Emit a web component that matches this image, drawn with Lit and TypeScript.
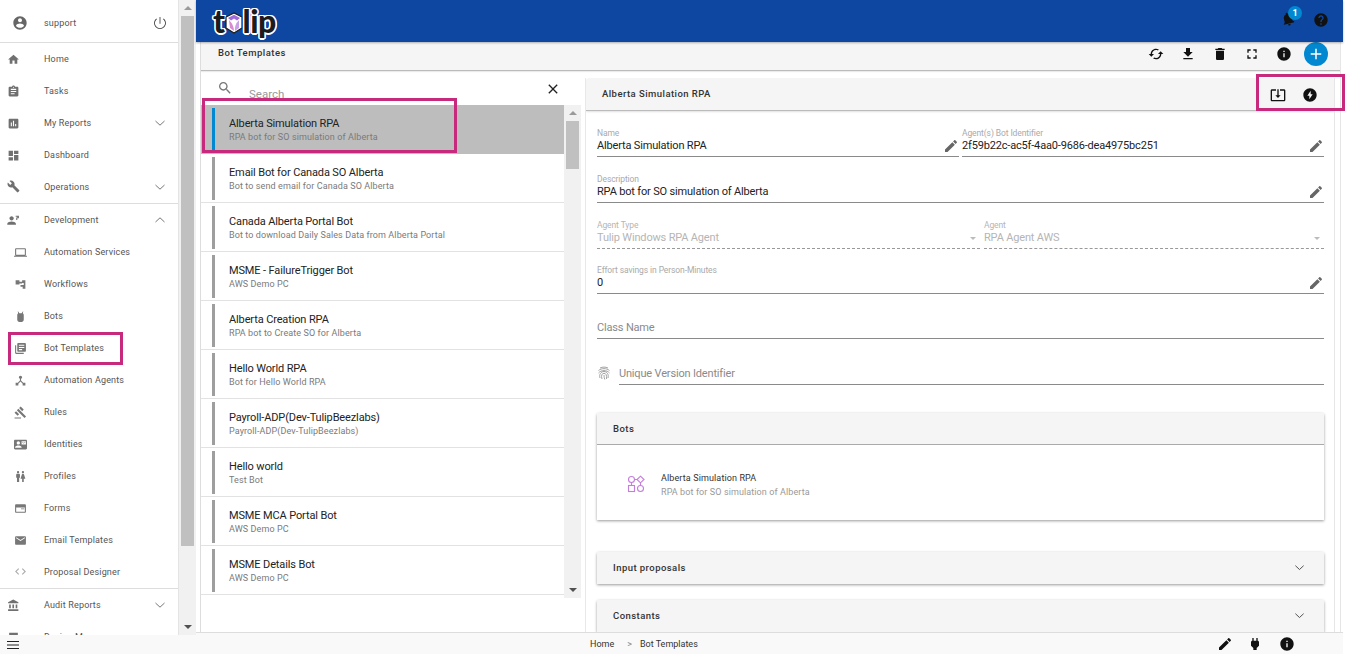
import { LitElement, html, css } from "lit";
import { customElement } from "lit/decorators.js";

const P: Record<string, string> = {
  account: "M12 2C6.48 2 2 6.48 2 12s4.48 10 10 10 10-4.48 10-10S17.52 2 12 2zm0 3c1.66 0 3 1.34 3 3s-1.34 3-3 3-3-1.34-3-3 1.34-3 3-3zm0 14.2c-2.5 0-4.71-1.28-6-3.22.03-1.99 4-3.08 6-3.08 1.99 0 5.97 1.09 6 3.08-1.29 1.94-3.5 3.22-6 3.22z",
  power: "M12.6 3h-1.2v10h1.2V3zm4.9 2.4l-.85.85C18.4 7.6 19.6 9.7 19.6 12c0 4.2-3.4 7.6-7.6 7.6S4.4 16.2 4.4 12c0-2.3 1.2-4.4 2.95-5.75L6.5 5.4C4.4 7 3.2 9.4 3.2 12c0 4.9 3.9 8.8 8.8 8.8s8.8-3.9 8.8-8.8c0-2.6-1.2-5-3.3-6.6z",
  home: "M10 20v-6h4v6h5v-8h3L12 3 2 12h3v8z",
  tasks: "M19 3h-4.18C14.4 1.84 13.3 1 12 1c-1.3 0-2.4.84-2.82 2H5c-1.1 0-2 .9-2 2v14c0 1.1.9 2 2 2h14c1.1 0 2-.9 2-2V5c0-1.1-.9-2-2-2zm-7 0c.55 0 1 .45 1 1s-.45 1-1 1-1-.45-1-1 .45-1 1-1zm2 14H7v-2h7v2zm3-4H7v-2h10v2zm0-4H7V7h10v2z",
  reports: "M19 3H5c-1.1 0-2 .9-2 2v14c0 1.1.9 2 2 2h14c1.1 0 2-.9 2-2V5c0-1.1-.9-2-2-2zM9 17H7v-7h2v7zm4 0h-2V7h2v10zm4 0h-2v-4h2v4z",
  dashboard: "M3 13h8V3H3v10zm0 8h8v-6H3v6zm10 0h8V11h-8v10zm0-18v6h8V3h-8z",
  build: "M22.7 19l-9.1-9.1c.9-2.3.4-5-1.5-6.9-2-2-5-2.4-7.4-1.3L9 6 6 9 1.6 4.7C.4 7.1.9 10.1 2.9 12.1c1.9 1.9 4.6 2.4 6.9 1.5l9.1 9.1c.4.4 1 .4 1.4 0l2.3-2.3c.5-.4.5-1.1.1-1.4z",
  dev: "M8.5 12c2.2 0 4-1.8 4-4s-1.8-4-4-4-4 1.8-4 4 1.8 4 4 4zm0 2c-2.7 0-8 1.3-8 4v2h16v-2c0-2.7-5.3-4-8-4zM16 3h6v5h-3v3h-2V6.5h2V5h-3z",
  laptop: "M20 18c1.1 0 1.99-.9 1.99-2L22 6c0-1.1-.9-2-2-2H4c-1.1 0-2 .9-2 2v10c0 1.1.9 2 2 2H0v2h24v-2h-4zM4 6h16v10H4V6z",
  flows: "M3 4h7v8H3zM10 7h5v3h-5zM15 4h6v16h-5v-4h-4v-3h6V9h-3z",
  bot: "M9 6h6c1.7 0 3 1.3 3 3v9c0 2.2-1.8 4-4 4h-4c-2.2 0-4-1.8-4-4V9c0-1.7 1.3-3 3-3zM7 2l3 4H7.5zM17 2l-3 4h2.5z",
  library: "M4 6H2v14c0 1.1.9 2 2 2h14v-2H4V6zm16-4H8c-1.1 0-2 .9-2 2v12c0 1.1.9 2 2 2h12c1.1 0 2-.9 2-2V4c0-1.1-.9-2-2-2zm-1 9H9V9h10v2zm-4 4H9v-2h6v2zm4-8H9V5h10v2z",
  hub: "M17 16l-4-4V8.82C14.16 8.4 15 7.3 15 6c0-1.66-1.34-3-3-3S9 4.34 9 6c0 1.3.84 2.4 2 2.82V12l-4 4H3v5h5v-3.05l4-4.2 4 4.2V21h5v-5h-4z",
  gavel: "M1 21h12v2H1zM5.245 8.07l2.83-2.827 14.14 14.142-2.828 2.828zM12.317 1l5.657 5.656-2.83 2.83-5.654-5.66zM3.825 9.485l5.657 5.657-2.828 2.828-5.657-5.657z",
  identity: "M21 8V7l-3 2-3-2v1l3 2 3-2zm1-5H2C.9 3 0 3.9 0 5v14c0 1.1.9 2 2 2h20c1.1 0 1.99-.9 1.99-2L24 5c0-1.1-.9-2-2-2zM8 6c1.66 0 3 1.34 3 3s-1.34 3-3 3-3-1.34-3-3 1.34-3 3-3zm6 12H2v-1c0-2 4-3.1 6-3.1s6 1.1 6 3.1v1zm8-6h-8V6h8v6z",
  wc: "M5.5 22v-7.5H4V9c0-1.1.9-2 2-2h3c1.1 0 2 .9 2 2v5.5H9.5V22h-4zM18 22v-6h3l-2.54-7.63C18.18 7.55 17.42 7 16.56 7h-.12c-.86 0-1.63.55-1.9 1.37L12 16h3v6h3zM7.5 6c1.11 0 2-.89 2-2s-.89-2-2-2-2 .89-2 2 .89 2 2 2zm9 0c1.11 0 2-.89 2-2s-.89-2-2-2-2 .89-2 2 .89 2 2 2z",
  form: "M4 4h16c1.1 0 2 .9 2 2v12c0 1.1-.9 2-2 2H4c-1.1 0-2-.9-2-2V6c0-1.1.9-2 2-2zm0 6v8h16v-8zm9 2h6v1.5h-6z",
  mail: "M20 4H4c-1.1 0-1.99.9-1.99 2L2 18c0 1.1.9 2 2 2h16c1.1 0 2-.9 2-2V6c0-1.1-.9-2-2-2zm0 4l-8 5-8-5V6l8 5 8-5v2z",
  code: "M9.4 16.6L4.8 12l4.6-4.6L8 6l-6 6 6 6 1.4-1.4zm5.2 0l4.6-4.6-4.6-4.6L16 6l6 6-6 6-1.4-1.4z",
  bank: "M4 10v7h3v-7H4zm6 0v7h3v-7h-3zM2 22h19v-3H2v3zm14-12v7h3v-7h-3zm-4.5-9L2 6v2h19V6l-9.5-5z",
  design: "M4 3h16v7H4zM2 12h20v9H2z",
  search: "M15.5 14h-.79l-.28-.27C15.41 12.59 16 11.11 16 9.5 16 5.91 13.09 3 9.5 3S3 5.91 3 9.5 5.91 16 9.5 16c1.61 0 3.09-.59 4.23-1.57l.27.28v.79l5 4.99L20.49 19l-4.99-5zm-6 0C7.01 14 5 11.99 5 9.5S7.01 5 9.5 5 14 7.01 14 9.5 11.99 14 9.5 14z",
  close: "M19 6.41L17.59 5 12 10.59 6.41 5 5 6.41 10.59 12 5 17.59 6.41 19 12 13.41 17.59 19 19 17.59 13.41 12z",
  edit: "M3 17.25V21h3.75L17.81 9.94l-3.75-3.75L3 17.25zM20.71 7.04c.39-.39.39-1.02 0-1.41l-2.34-2.34c-.39-.39-1.02-.39-1.41 0l-1.83 1.83 3.75 3.75 1.83-1.83z",
  bell: "M12 22c1.1 0 2-.9 2-2h-4c0 1.1.9 2 2 2zm6-6v-5c0-3.07-1.63-5.64-4.5-6.32V4c0-.83-.67-1.5-1.5-1.5s-1.5.67-1.5 1.5v.68C7.64 5.36 6 7.92 6 11v5l-2 2v1h16v-1l-2-2z",
  help: "M12 2C6.48 2 2 6.48 2 12s4.48 10 10 10 10-4.48 10-10S17.52 2 12 2zm1 17h-2v-2h2v2zm2.07-7.75l-.9.92C13.45 12.9 13 13.5 13 15h-2v-.5c0-1.1.45-2.1 1.17-2.83l1.24-1.26c.37-.36.59-.86.59-1.41 0-1.1-.9-2-2-2s-2 .9-2 2H8c0-2.21 1.79-4 4-4s4 1.79 4 4c0 .88-.36 1.68-.93 2.25z",
  sync: "M12 4V1L8 5l4 4V6c3.31 0 6 2.69 6 6 0 1.01-.25 1.97-.7 2.8l1.46 1.46C19.54 15.03 20 13.57 20 12c0-4.42-3.58-8-8-8zm0 14c-3.31 0-6-2.69-6-6 0-1.01.25-1.97.7-2.8L5.24 7.74C4.46 8.97 4 10.43 4 12c0 4.42 3.58 8 8 8v3l4-4-4-4v3z",
  download: "M19 9h-4V3H9v6H5l7 7 7-7zM5 18v2h14v-2H5z",
  trash: "M6 19c0 1.1.9 2 2 2h8c1.1 0 2-.9 2-2V7H6v12zM19 4h-3.5l-1-1h-5l-1 1H5v2h14V4z",
  full: "M7 14H5v5h5v-2H7v-3zm-2-4h2V7h3V5H5v5zm12 7h-3v2h5v-5h-2v3zM14 5v2h3v3h2V5h-5z",
  info: "M12 2C6.48 2 2 6.48 2 12s4.48 10 10 10 10-4.48 10-10S17.52 2 12 2zm1 15h-2v-6h2v6zm0-8h-2V7h2v2z",
  add: "M19 13h-6v6h-2v-6H5v-2h6V5h2v6h6v2z",
  update: "M12 16.5l4-4h-3v-9h-2v9H8l4 4zm9-13h-6v1.99h6v14.03H3V5.49h6V3.5H3c-1.1 0-2 .9-2 2v14c0 1.1.9 2 2 2h18c1.1 0 2-.9 2-2v-14c0-1.1-.9-2-2-2z",
  flash: "M12 2C6.48 2 2 6.48 2 12s4.48 10 10 10 10-4.48 10-10S17.52 2 12 2zm-1 16.5V13H8l5-7.5V11h3l-5 7.5z",
  plug: "M16.01 7L16 3h-2v4h-4V3H8v4h-.01C7 6.99 6 7.99 6 8.99v5.49L9.5 18v3h5v-3l3.5-3.51v-5.5c0-1-1-2-1.99-1.99z",
  menu: "M3 18h18v-1.5H3V18zm0-5.25h18v-1.5H3v1.5zM3 6v1.5h18V6H3z",
};

const icon = (name: string, cls = "") =>
  html`<svg class="ic ${cls}" viewBox="0 0 24 24" aria-hidden="true"><path d=${P[name]}></path></svg>`;

const chevron = (up = false) =>
  html`<svg class="chev" viewBox="0 0 12 12" aria-hidden="true"><polyline points=${up ? "1.5,8 6,3.8 10.5,8" : "1.5,4 6,8.2 10.5,4"}></polyline></svg>`;

interface Nav { label: string; icon: string; sub?: boolean; chev?: "up" | "down"; rule?: boolean; }

const NAV: Nav[] = [
  { label: "Home", icon: "home" },
  { label: "Tasks", icon: "tasks" },
  { label: "My Reports", icon: "reports", chev: "down" },
  { label: "Dashboard", icon: "dashboard" },
  { label: "Operations", icon: "build", chev: "down", rule: true },
  { label: "Development", icon: "dev", chev: "up" },
  { label: "Automation Services", icon: "laptop", sub: true },
  { label: "Workflows", icon: "flows", sub: true },
  { label: "Bots", icon: "bot", sub: true },
  { label: "Bot Templates", icon: "library", sub: true },
  { label: "Automation Agents", icon: "hub", sub: true },
  { label: "Rules", icon: "gavel", sub: true },
  { label: "Identities", icon: "identity", sub: true },
  { label: "Profiles", icon: "wc", sub: true },
  { label: "Forms", icon: "form", sub: true },
  { label: "Email Templates", icon: "mail", sub: true },
  { label: "Proposal Designer", icon: "code", sub: true, rule: true },
  { label: "Audit Reports", icon: "bank", chev: "down" },
  { label: "Design Manager", icon: "design" },
];

const ITEMS: [string, string][] = [
  ["Alberta Simulation RPA", "RPA bot for SO simulation of Alberta"],
  ["Email Bot for Canada SO Alberta", "Bot to send email for Canada SO Alberta"],
  ["Canada Alberta Portal Bot", "Bot to download Daily Sales Data from Alberta Portal"],
  ["MSME - FailureTrigger Bot", "AWS Demo PC"],
  ["Alberta Creation RPA", "RPA bot to Create SO for Alberta"],
  ["Hello World RPA", "Bot for Hello World RPA"],
  ["Payroll-ADP(Dev-TulipBeezlabs)", "Payroll-ADP(Dev-TulipBeezlabs)"],
  ["Hello world", "Test Bot"],
  ["MSME MCA Portal Bot", "AWS Demo PC"],
  ["MSME Details Bot", "AWS Demo PC"],
];

@customElement("app-root")
export class AppRoot extends LitElement {
  static styles = css`
    :host { display: block; position: relative; width: 1362px; height: 654px; overflow: hidden; background: #fff; font-family: Roboto, "Liberation Sans", sans-serif; color: #222; }
    * { box-sizing: border-box; }
    .ic { display: block; width: 16px; height: 16px; fill: currentColor; flex: none; }
    .chev { display: block; width: 12px; height: 12px; fill: none; stroke: #777; stroke-width: 1; flex: none; }
    .app { display: grid; grid-template-columns: 196px 1fr; width: 1343px; height: 654px; }

    .leftcol { display: flex; flex-direction: column; min-height: 0; height: 654px; }
    .side { flex: 1; display: flex; min-height: 0; }
    .menu { width: 179px; overflow: hidden; border-right: 1px solid #e4e4e4; }
    .profile { height: 43px; display: flex; align-items: center; border-bottom: 1px solid #ddd; color: #555; font-size: 9px; letter-spacing: .2px; padding-top: 4px; }
    .profile .who { width: 44px; display: flex; padding-left: 12px; color: #666; }
    .profile .grow { flex: 1; }
    .profile .pw { margin-right: 10px; color: #333; width: 16px; height: 16px; }
    .row { height: 32px; display: flex; align-items: center; color: #555; font-size: 9px; letter-spacing: .17px; }
    .row.rule { height: 33px; padding-bottom: 1px; border-bottom: 1px solid #ddd; }
    .row .slot { width: 44px; flex: none; display: flex; padding-left: 6.5px; color: #707070; }
    .row.sub .slot { padding-left: 13.5px; color: #777; }
    .row .slot .ic { width: 13px; height: 13px; }
    .row .slot .i-code { color: #aaa; }
    .row .lab { flex: 1; white-space: nowrap; }
    .row .chev { margin-right: 12px; }
    .sbar { width: 17px; background: #f1f1f1; display: flex; flex-direction: column; align-items: center; }
    .arr { width: 17px; height: 16px; display: flex; align-items: center; justify-content: center; flex: none; }
    .tri-up { width: 0; height: 0; border-left: 4px solid transparent; border-right: 4px solid transparent; border-bottom: 4px solid #9a9a9a; }
    .tri-dn { width: 0; height: 0; border-left: 4px solid transparent; border-right: 4px solid transparent; border-top: 4px solid #505050; }
    .side .thumb { width: 13px; height: 530px; background: #c0c0c0; flex: none; }
    .sp { flex: 1; }
    .leftfoot { height: 19px; flex: none; background: #f9f9f9; display: flex; align-items: center; padding-left: 5px; color: #222; }

    .maincol { display: flex; flex-direction: column; min-width: 0; height: 654px; }
    .top { height: 42px; flex: none; background: #0d47a1; display: flex; align-items: center; padding: 0 14px 0 17px; box-shadow: 0 1px 2px rgba(0,0,0,.3); position: relative; z-index: 2; }
    .logo { display: flex; align-items: center; font-family: Lato, "Open Sans", sans-serif; font-weight: 900; font-size: 32px; line-height: 36px; letter-spacing: -.5px; color: #1c1c1c; text-shadow: 1.5px 0 #fff, -1.5px 0 #fff, 0 1.5px #fff, 0 -1.5px #fff, 1.2px 1.2px #fff, -1.2px -1.2px #fff, 1.2px -1.2px #fff, -1.2px 1.2px #fff; margin-top: -1px; }
    .logo svg { width: 18px; height: 22px; margin-top: 5px; flex: none; }
    .grow { flex: 1; }
    .bellwrap { position: relative; width: 16px; height: 16px; margin: -4px 17px 0 0; color: #111; }
    .bellwrap .ic { transform: rotate(-14deg); }
    .badge { position: absolute; left: 8px; top: -5px; width: 14px; height: 14px; border-radius: 50%; background: #0288d1; color: #fff; font-size: 9px; font-weight: 700; display: flex; align-items: center; justify-content: center; }
    .help { color: #111; margin-top: -2px; }

    .body-wrap { flex: 1; min-height: 0; margin-left: 4px; margin-right: 2px; border-left: 1px solid #ddd; border-right: 1px solid #e6e6e6; display: flex; flex-direction: column; overflow: hidden; }
    .tools { height: 29px; flex: none; background: #f5f5f5; border-bottom: 1px solid #bbb; box-shadow: 0 1px 1px rgba(0,0,0,.08); display: flex; padding-right: 12px; }
    .tools .ttl { font-size: 9.5px; font-weight: 500; letter-spacing: .5px; padding: 5px 0 0 17px; color: #333; line-height: 12px; }
    .tools .acts { margin-left: auto; display: flex; align-items: center; gap: 16px; color: #111; height: 24px; }
    .tools .acts .i-sync { transform: rotate(90deg); }
    .fab { width: 24px; height: 24px; border-radius: 50%; background: #0288d1; color: #fff; display: flex; align-items: center; justify-content: center; margin-left: -4px; }
    .fab .ic { width: 18px; height: 18px; }

    .split { flex: 1; min-height: 0; display: flex; gap: 4px; }
    .listpane { width: 380px; flex: none; display: flex; flex-direction: column; }
    .searchrow { height: 34px; flex: none; display: flex; padding: 9px 20px 0 16px; color: #666; }
    .searchrow .mag { width: 16px; height: 16px; color: #777; }
    .searchrow .ph { font-size: 11.5px; color: #999; margin: 7px 0 0 16px; line-height: 14px; }
    .searchrow .x { margin-left: auto; color: #222; width: 16px; height: 16px; margin-top: 1px; }
    .listwrap { height: 493px; display: flex; flex: none; }
    .list { width: 363px; flex: none; overflow: hidden; }
    .item { height: 49px; display: flex; padding: 3px 0 2px 11px; border-bottom: 1px solid #e2e2e2; }
    .item:first-child { background: #bdbdbd; border-bottom-color: #bdbdbd; }
    .item .bar { width: 3px; background: #9e9e9e; flex: none; }
    .item:first-child .bar { background: #0288d1; }
    .item .txt { padding: 9px 0 0 14px; }
    .item .t { font-size: 11px; line-height: 14px; color: #222; white-space: nowrap; letter-spacing: -.13px; }
    .item .s { font-size: 9px; line-height: 12px; color: #7a7a7a; white-space: nowrap; letter-spacing: .1px; }
    .lbar { width: 17px; background: #f1f1f1; display: flex; flex-direction: column; align-items: center; }
    .lbar .thumb { width: 13px; height: 48px; background: #c0c0c0; flex: none; }

    .detail { flex: 1; min-width: 0; margin-top: 7px; margin-right: 5px; border-left: 1px solid #e8e8e8; border-right: 1px solid #e6e6e6; overflow: hidden; }
    .dhead { height: 33px; background: #f5f5f5; border-bottom: 1px solid #bbb; border-radius: 4px 4px 0 0; box-shadow: 0 1px 2px rgba(0,0,0,.12); display: flex; align-items: center; padding: 0 16px; }
    .dhead .ttl { font-size: 9.5px; font-weight: 500; letter-spacing: .45px; color: #333; margin-top: -2px; }
    .dhead .acts { margin-left: auto; display: flex; gap: 16px; color: #111; margin-top: 2px; }
    .form { padding: 16px 10px 0 11px; }
    .f { height: 30px; display: flex; flex-direction: column; justify-content: flex-end; border-bottom: 1px solid #8a8a8a; min-width: 0; }
    .l { font-size: 8.5px; line-height: 10px; color: #aaa; white-space: nowrap; margin-bottom: 1px; letter-spacing: -.1px; }
    .v { display: flex; align-items: center; height: 14px; margin-bottom: 3px; font-size: 11px; line-height: 14px; color: #222; white-space: nowrap; letter-spacing: -.17px; }
    .v span { flex: 1; }
    .v .ic { color: #666; margin: -2px 0 -2px; }
    .pair { display: flex; gap: 3px; }
    .pair .f { flex: 1; }
    .gap16 { margin-top: 16px; }
    .gap15 { margin-top: 15px; }
    .tworow { display: flex; gap: 4px; }
    .dis { border-bottom: 1px dashed #999; }
    .dis.a { width: 383px; flex: none; }
    .dis.b { flex: 1; }
    .dis .v, .dis .l { color: #b5b5b5; }
    .v .tri { width: 0; height: 0; border-left: 3.5px solid transparent; border-right: 3.5px solid transparent; border-top: 3.5px solid #bbb; margin-right: 4px; }
    .v.ph { color: #8a8a8a; }
    .uv { display: flex; }
    .uv .fp { width: 14px; height: 14px; margin: 11px 8px 0 0; flex: none; stroke: #999; fill: none; stroke-width: .9; }
    .uv .f { flex: 1; }
    .card { box-shadow: 0 1px 3px rgba(0,0,0,.4); border-radius: 2px 2px 0 0; }
    .ch { height: 32px; background: #f5f5f5; display: flex; align-items: center; padding: 0 19px 0 16px; font-size: 9.5px; font-weight: 500; letter-spacing: .45px; color: #333; }
    .ch .chev { margin-left: auto; stroke: #444; width: 11px; height: 11px; }
    .c2 .ch, .c3 .ch { padding-bottom: 2px; }
    .bots { margin-top: 28px; }
    .bots .ch { border-bottom: 1px solid #aaa; }
    .cb { height: 75px; display: flex; align-items: center; padding-left: 30px; }
    .cb svg { width: 18px; height: 18px; fill: none; stroke: #c47fdc; stroke-width: 1.1; flex: none; margin-top: 2px; }
    .cb .tx { margin: 4px 0 0 16px; }
    .cb .a { font-size: 9px; line-height: 14px; color: #333; letter-spacing: .12px; }
    .cb .b { font-size: 9px; line-height: 14px; color: #999; letter-spacing: .1px; }
    .c2 { margin-top: 32px; }
    .c3 { margin-top: 16px; }

    .foot { height: 22px; flex: none; background: #f9f9f9; border-top: 1px solid #ddd; display: flex; align-items: center; padding: 0 48px 0 394px; font-size: 9px; color: #333; position: relative; z-index: 1; }
    .foot .sep { margin: 0 8px 0 13px; color: #888; }
    .foot .acts { margin-left: auto; display: flex; gap: 14px; color: #111; }
    .foot .acts .ic:last-child { margin-left: 2px; }

    .mark { position: absolute; border: 3px solid #c72a7c; pointer-events: none; z-index: 5; }
    .m1 { left: 8px; top: 332px; width: 115px; height: 33px; }
    .m2 { left: 202px; top: 98px; width: 255px; height: 55px; }
    .m3 { left: 1256px; top: 74px; width: 89px; height: 37px; }
  `;

  render() {
    return html`
      <div class="app">
        <div class="leftcol">
          <div class="side">
            <nav class="menu">
              <div class="profile">
                <div class="who">${icon("account")}</div>
                <span>support</span>
                <div class="grow"></div>
                ${icon("power", "pw")}
              </div>
              ${NAV.map(
                (n) => html`
                  <div class="row ${n.sub ? "sub" : ""} ${n.rule ? "rule" : ""}">
                    <div class="slot">${icon(n.icon, "i-" + n.icon)}</div>
                    <span class="lab">${n.label}</span>
                    ${n.chev ? chevron(n.chev === "up") : ""}
                  </div>`
              )}
            </nav>
            <div class="sbar">
              <div class="arr"><div class="tri-up"></div></div>
              <div class="thumb"></div>
              <div class="sp"></div>
              <div class="arr"><div class="tri-dn"></div></div>
            </div>
          </div>
          <div class="leftfoot">${icon("menu")}</div>
        </div>

        <div class="maincol">
          <header class="top">
            <div class="logo">
              <span>t</span>
              <svg viewBox="0 0 18 22" aria-hidden="true">
                <path d="M1 5 L9 1 L17 5 V16 L9 21 L1 16 Z" fill="#fff" stroke="#1c1c1c" stroke-width="1.2"></path>
                <path d="M3 6 L9 2.8 L15 6 L12 8.5 L9 6.5 L6 8.5 Z" fill="#a06ad8"></path>
                <path d="M4 8 Q9 13 9 19 L5 16 Z" fill="#d98ad0"></path>
                <path d="M14 8 Q9 13 10 19 L14 16 Z" fill="#c9a0e8"></path>
              </svg>
              <span>lip</span>
            </div>
            <div class="grow"></div>
            <div class="bellwrap">
              ${icon("bell")}
              <div class="badge">1</div>
            </div>
            ${icon("help", "help")}
          </header>

          <div class="body-wrap">
            <div class="tools">
              <div class="ttl">Bot Templates</div>
              <div class="acts">
                ${icon("sync", "i-sync")} ${icon("download")} ${icon("trash")} ${icon("full")} ${icon("info")}
                <div class="fab">${icon("add")}</div>
              </div>
            </div>
            <div class="split">
              <section class="listpane">
                <div class="searchrow">
                  ${icon("search", "mag")}
                  <span class="ph">Search</span>
                  ${icon("close", "x")}
                </div>
                <div class="listwrap">
                  <div class="list">
                    ${ITEMS.map(
                      ([t, s]) => html`
                        <div class="item">
                          <div class="bar"></div>
                          <div class="txt"><div class="t">${t}</div><div class="s">${s}</div></div>
                        </div>`
                    )}
                  </div>
                  <div class="lbar">
                    <div class="arr"><div class="tri-up"></div></div>
                    <div class="thumb"></div>
                    <div class="sp"></div>
                    <div class="arr"><div class="tri-dn"></div></div>
                  </div>
                </div>
              </section>

              <section class="detail">
                <div class="dhead">
                  <div class="ttl">Alberta Simulation RPA</div>
                  <div class="acts">${icon("update")} ${icon("flash")}</div>
                </div>
                <div class="form">
                  <div class="pair">
                    <div class="f"><div class="l">Name</div><div class="v"><span>Alberta Simulation RPA</span>${icon("edit")}</div></div>
                    <div class="f"><div class="l">Agent(s) Bot Identifier</div><div class="v"><span>2f59b22c-ac5f-4aa0-9686-dea4975bc251</span>${icon("edit")}</div></div>
                  </div>
                  <div class="f gap16"><div class="l">Description</div><div class="v"><span>RPA bot for SO simulation of Alberta</span>${icon("edit")}</div></div>
                  <div class="tworow gap16">
                    <div class="f dis a"><div class="l">Agent Type</div><div class="v"><span>Tulip Windows RPA Agent</span><div class="tri"></div></div></div>
                    <div class="f dis b"><div class="l">Agent</div><div class="v"><span>RPA Agent AWS</span><div class="tri"></div></div></div>
                  </div>
                  <div class="f gap15"><div class="l">Effort savings in Person-Minutes</div><div class="v"><span>0</span>${icon("edit")}</div></div>
                  <div class="f gap15"><div class="v ph"><span>Class Name</span></div></div>
                  <div class="uv gap16">
                    <svg class="fp" viewBox="0 0 14 14" aria-hidden="true">
                      <path d="M3 2C5.5 .8 8.5 .8 11 2M1.5 4.5C4.5 2 9.5 2 12.5 4.5M1.5 7C4 3.8 10 3.8 12.5 7M3 12C1.8 8.5 4 5.5 7 5.5s5 3 4 6.5M5 13C3.8 9.5 5 7.3 7 7.3s3 2 2.5 5.7M7 9c0 1.5.2 3 .8 4.5"></path>
                    </svg>
                    <div class="f"><div class="v ph"><span>Unique Version Identifier</span></div></div>
                  </div>
                  <div class="card bots">
                    <div class="ch">Bots</div>
                    <div class="cb">
                      <svg viewBox="0 0 18 18" aria-hidden="true">
                        <circle cx="4.5" cy="4.5" r="3"></circle>
                        <path d="M13.5 1.2L17 4.5L13.5 7.8L10 4.5Z"></path>
                        <rect x="1.5" y="10.5" width="6" height="6"></rect>
                        <circle cx="13.5" cy="13.5" r="3"></circle>
                        <path d="M7.5 4.5H10M13.5 7.8V10.5M4.5 7.5V10.5"></path>
                      </svg>
                      <div class="tx">
                        <div class="a">Alberta Simulation RPA</div>
                        <div class="b">RPA bot for SO simulation of Alberta</div>
                      </div>
                    </div>
                  </div>
                  <div class="card c2"><div class="ch">Input proposals ${chevron()}</div></div>
                  <div class="card c3"><div class="ch">Constants ${chevron()}</div></div>
                </div>
              </section>
            </div>
          </div>

          <footer class="foot">
            <span>Home</span><span class="sep">&gt;</span><span>Bot Templates</span>
            <div class="acts">${icon("edit")} ${icon("plug")} ${icon("info")}</div>
          </footer>
        </div>
      </div>
      <div class="mark m1"></div>
      <div class="mark m2"></div>
      <div class="mark m3"></div>
    `;
  }
}
